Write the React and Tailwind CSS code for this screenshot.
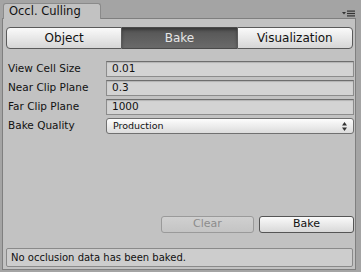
import React from 'react';

const font = { fontFamily: '"DejaVu Sans", "Liberation Sans", sans-serif' };

function Field({ label, value }) {
  return (
    <div className="flex items-center h-[16px]">
      <div className="w-[100px] pl-[2px] text-[10.5px] text-[#111]">{label}</div>
      <div className="flex-1 h-[16px] flex items-center pl-[5px] bg-[#d3d3d3] border border-[#8c8c8c] border-t-[#6e6e6e] shadow-[inset_0_1px_1px_rgba(0,0,0,0.15)] text-[10.5px] text-[#111]">
        {value}
      </div>
    </div>
  );
}

export default function App() {
  return (
    <div style={font} className="w-[361px] h-[272px] bg-[#a4a4a4] flex flex-col pt-[3px] pl-[2px] pr-[5px] pb-[2px]">
      {/* tab strip */}
      <div className="flex items-end justify-between h-[15px]">
        <div className="relative z-10 -mb-px ml-px w-[98px] h-[16px] bg-[#c2c2c2] border border-b-0 border-[#8a8a8a] rounded-t-[3px] flex items-center pl-[5px] text-[11.5px] text-[#111]">
          Occl. Culling
        </div>
        <svg width="13" height="7" viewBox="0 0 13 7" className="mb-[1px] mr-[1px]">
          <path d="M0 2h4L2 4.5z" fill="#333" />
          <rect x="5" y="0.5" width="8" height="1.2" fill="#333" />
          <rect x="5" y="2.9" width="8" height="1.2" fill="#333" />
          <rect x="5" y="5.3" width="8" height="1.2" fill="#333" />
        </svg>
      </div>

      {/* panel */}
      <div className="flex-1 border border-[#7f7f7f] bg-[#c2c2c2] flex flex-col pl-[3px] pr-px pb-[2px]">
        {/* toolbar */}
        <div className="mt-[8px] flex h-[22px] pr-px">
          <div className="flex-1 flex items-center justify-center rounded-l-[4px] border border-[#5a5a5a] bg-gradient-to-b from-[#fafafa] to-[#d6d6d6] text-[12px] text-[#111]">
            Object
          </div>
          <div className="flex-1 flex items-center justify-center border-y border-[#4a4a4a] bg-gradient-to-b from-[#545454] to-[#6a6a6a] shadow-[inset_0_2px_3px_rgba(0,0,0,0.35)] text-[12px] text-[#e6e6e6]">
            Bake
          </div>
          <div className="flex-1 flex items-center justify-center rounded-r-[4px] border border-[#5a5a5a] bg-gradient-to-b from-[#fafafa] to-[#d6d6d6] text-[12px] text-[#111]">
            Visualization
          </div>
        </div>

        {/* fields */}
        <div className="mt-[12px] flex flex-col gap-[3px]">
          <Field label="View Cell Size" value="0.01" />
          <Field label="Near Clip Plane" value="0.3" />
          <Field label="Far Clip Plane" value="1000" />
          <div className="flex items-center h-[16px]">
            <div className="w-[100px] pl-[2px] text-[10.5px] text-[#111]">Bake Quality</div>
            <div className="flex-1 h-[16px] flex items-center justify-between pl-[6px] pr-[6px] rounded-[3px] border border-[#707070] bg-gradient-to-b from-[#fdfdfd] to-[#dcdcdc] text-[9.5px] text-[#111]">
              <span>Production</span>
              <svg width="5" height="9" viewBox="0 0 5 9">
                <path d="M0 3.5L2.5 0L5 3.5z" fill="#333" />
                <path d="M0 5.5L2.5 9L5 5.5z" fill="#333" />
              </svg>
            </div>
          </div>
        </div>

        <div className="flex-1" />

        {/* buttons */}
        <div className="flex justify-end gap-[5px] h-[17px]">
          <div className="w-[93px] flex items-center justify-center rounded-[3px] border border-[#9a9a9a] bg-gradient-to-b from-[#d0d0d0] to-[#c4c4c4] text-[11px] text-[#8c8c8c]">
            Clear
          </div>
          <div className="w-[95px] flex items-center justify-center rounded-[3px] border border-[#555] bg-gradient-to-b from-[#fafafa] to-[#d8d8d8] text-[11px] text-[#111]">
            Bake
          </div>
        </div>

        {/* status */}
        <div className="mt-[15px] mr-px h-[19px] flex items-center pl-[4px] rounded-[2px] border border-[#8a8a8a] bg-[#cdcdcd] text-[10px] text-[#111]">
          No occlusion data has been baked.
        </div>
      </div>
    </div>
  );
}
